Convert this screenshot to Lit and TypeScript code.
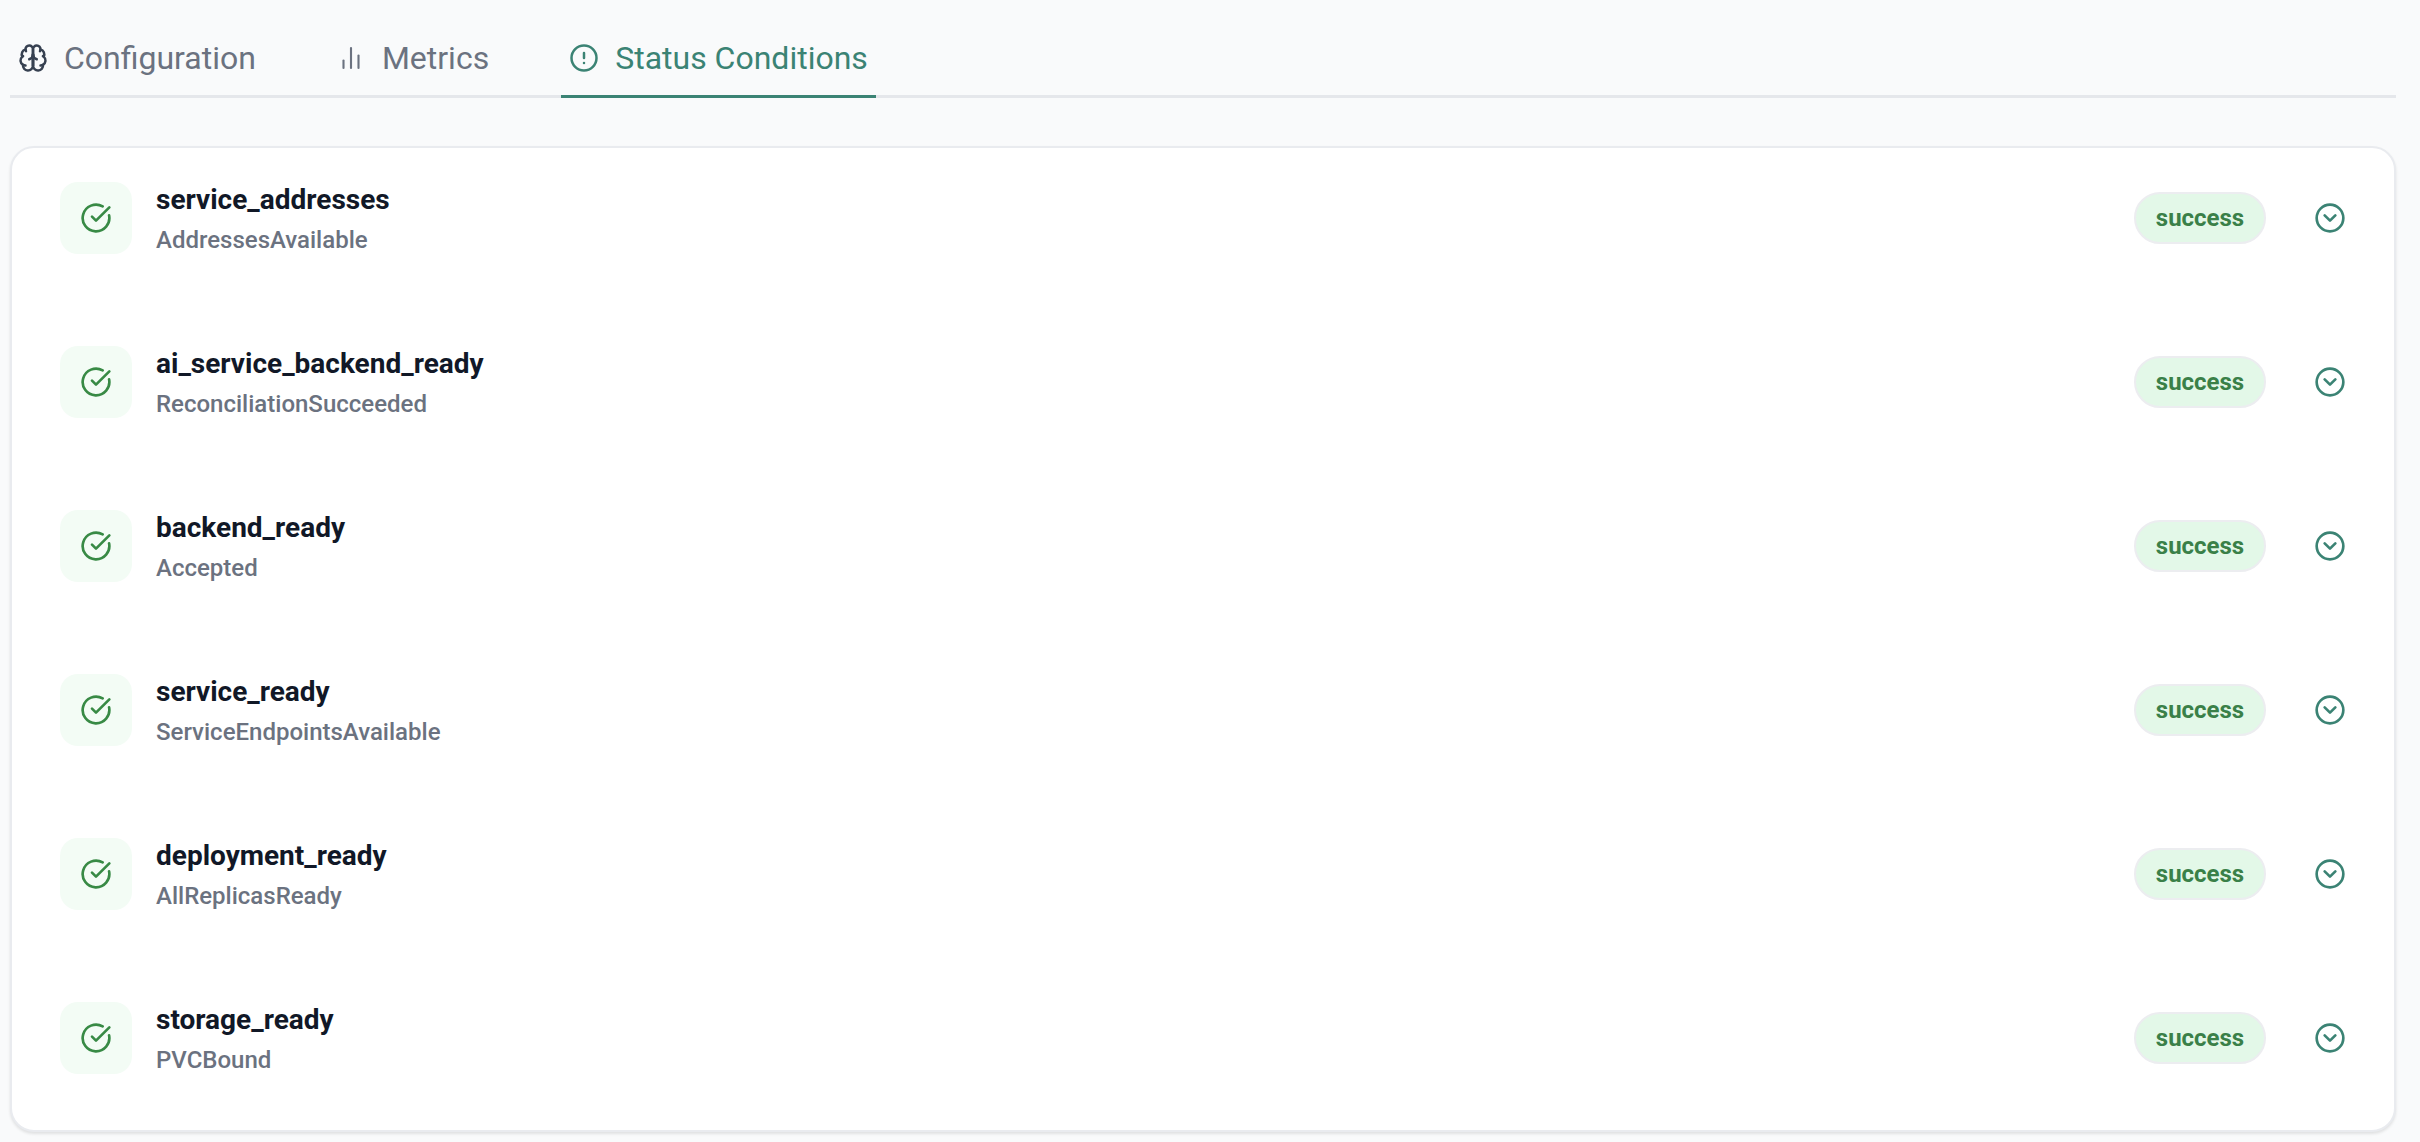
import { LitElement, html, css, svg } from "lit";
import { customElement } from "lit/decorators.js";

const icon = (paths: unknown, cls: string) => html`<svg class=${cls} viewBox="0 0 24 24" fill="none" stroke="currentColor" stroke-linecap="round" stroke-linejoin="round">${paths}</svg>`;

const brain = svg`<path d="M12 5a3 3 0 1 0-5.997.125 4 4 0 0 0-2.526 5.77 4 4 0 0 0 .556 6.588A4 4 0 1 0 12 18Z"/><path d="M12 5a3 3 0 1 1 5.997.125 4 4 0 0 1 2.526 5.77 4 4 0 0 1-.556 6.588A4 4 0 1 1 12 18Z"/><path d="M15 13a4.5 4.5 0 0 1-3-4 4.5 4.5 0 0 1-3 4"/><path d="M12 18V9"/><path d="M17.599 6.5a3 3 0 0 0 .399-1.375"/><path d="M6.003 5.125A3 3 0 0 0 6.401 6.5"/><path d="M3.477 10.896a4 4 0 0 1 .585-.396"/><path d="M19.938 10.5a4 4 0 0 1 .585.396"/><path d="M6 18a4 4 0 0 1-1.967-.516"/><path d="M19.967 17.484A4 4 0 0 1 18 18"/>`;
const bars = svg`<path d="M18 20V10"/><path d="M12 20V4"/><path d="M6 20v-6"/>`;
const alert = svg`<circle cx="12" cy="12" r="10"/><path d="M12 8v4"/><path d="M12 16h.01"/>`;
const check = svg`<path d="M21.801 10A10 10 0 1 1 17 3.335"/><path d="m9 11 3 3L22 4"/>`;
const chevron = svg`<circle cx="12" cy="12" r="10"/><path d="m16 10-4 4-4-4"/>`;

const rows = [
  ["service_addresses", "AddressesAvailable"],
  ["ai_service_backend_ready", "ReconciliationSucceeded"],
  ["backend_ready", "Accepted"],
  ["service_ready", "ServiceEndpointsAvailable"],
  ["deployment_ready", "AllReplicasReady"],
  ["storage_ready", "PVCBound"],
];

@customElement("app-root")
export class AppRoot extends LitElement {
  static styles = css`
    :host {
      display: block;
      box-sizing: border-box;
      height: 1142px;
      overflow: hidden;
      background: #f9fafb;
      padding: 0 24px 0 10px;
      font-family: Roboto, "Liberation Sans", sans-serif;
    }
    .tabs {
      display: flex;
      gap: 64px;
      padding-top: 40px;
      border-bottom: 3px solid #e5e7eb;
      height: 55px;
      box-sizing: content-box;
    }
    .tab {
      display: flex;
      align-items: flex-start;
      gap: 16px;
      padding: 0 8px;
      height: 55px;
      font-size: 32px;
      line-height: 36px;
      color: #6b7280;
      box-sizing: content-box;
    }
    .tab.active {
      color: #3b8374;
      border-bottom: 3px solid #3b8374;
    }
    .tab-icon {
      width: 30px;
      height: 30px;
      margin-top: 3px;
      stroke-width: 2;
    }
    .tab-icon.dark { color: #374151; }
    .tab-icon.thin { stroke-width: 1.7; }
    .card {
      margin-top: 48px;
      background: #fff;
      border: 2px solid #e9ebef;
      border-radius: 24px;
      box-shadow: 0 2px 3px rgba(0, 0, 0, 0.1);
      padding: 34px 48px 56px;
      display: flex;
      flex-direction: column;
      gap: 92px;
    }
    .row {
      display: flex;
      align-items: center;
      height: 72px;
    }
    .badge-box {
      width: 72px;
      height: 72px;
      border-radius: 18px;
      background: #f3fcf5;
      color: #388a45;
      display: flex;
      align-items: center;
      justify-content: center;
      margin-right: 24px;
    }
    .check { width: 32px; height: 32px; stroke-width: 2; }
    .text { flex: 1; display: flex; flex-direction: column; gap: 8px; padding-top: 1px; }
    .name {
      font-size: 28px;
      line-height: 32px;
      font-weight: 700;
      color: #111827;
    }
    .reason {
      font-size: 24px;
      line-height: 28px;
      font-weight: 500;
      color: #6b7280;
      margin-top: 2px;
    }
    .pill {
      box-sizing: border-box;
      width: 132px;
      height: 52px;
      border-radius: 26px;
      background: #e3f8e8;
      border: 2px solid #ecedf0;
      color: #3a8048;
      font-size: 24px;
      font-weight: 700;
      display: flex;
      align-items: center;
      justify-content: center;
      margin-right: 48px;
    }
    .chev { width: 32px; height: 32px; stroke-width: 2; color: #3b8374; }
  `;

  render() {
    return html`
      <div class="tabs">
        <div class="tab">${icon(brain, "tab-icon dark")}<span>Configuration</span></div>
        <div class="tab">${icon(bars, "tab-icon thin")}<span>Metrics</span></div>
        <div class="tab active">${icon(alert, "tab-icon")}<span>Status Conditions</span></div>
      </div>
      <div class="card">
        ${rows.map(([n, r]) => html`
          <div class="row">
            <div class="badge-box">${icon(check, "check")}</div>
            <div class="text"><div class="name">${n}</div><div class="reason">${r}</div></div>
            <div class="pill">success</div>
            ${icon(chevron, "chev")}
          </div>`)}
      </div>
    `;
  }
}
